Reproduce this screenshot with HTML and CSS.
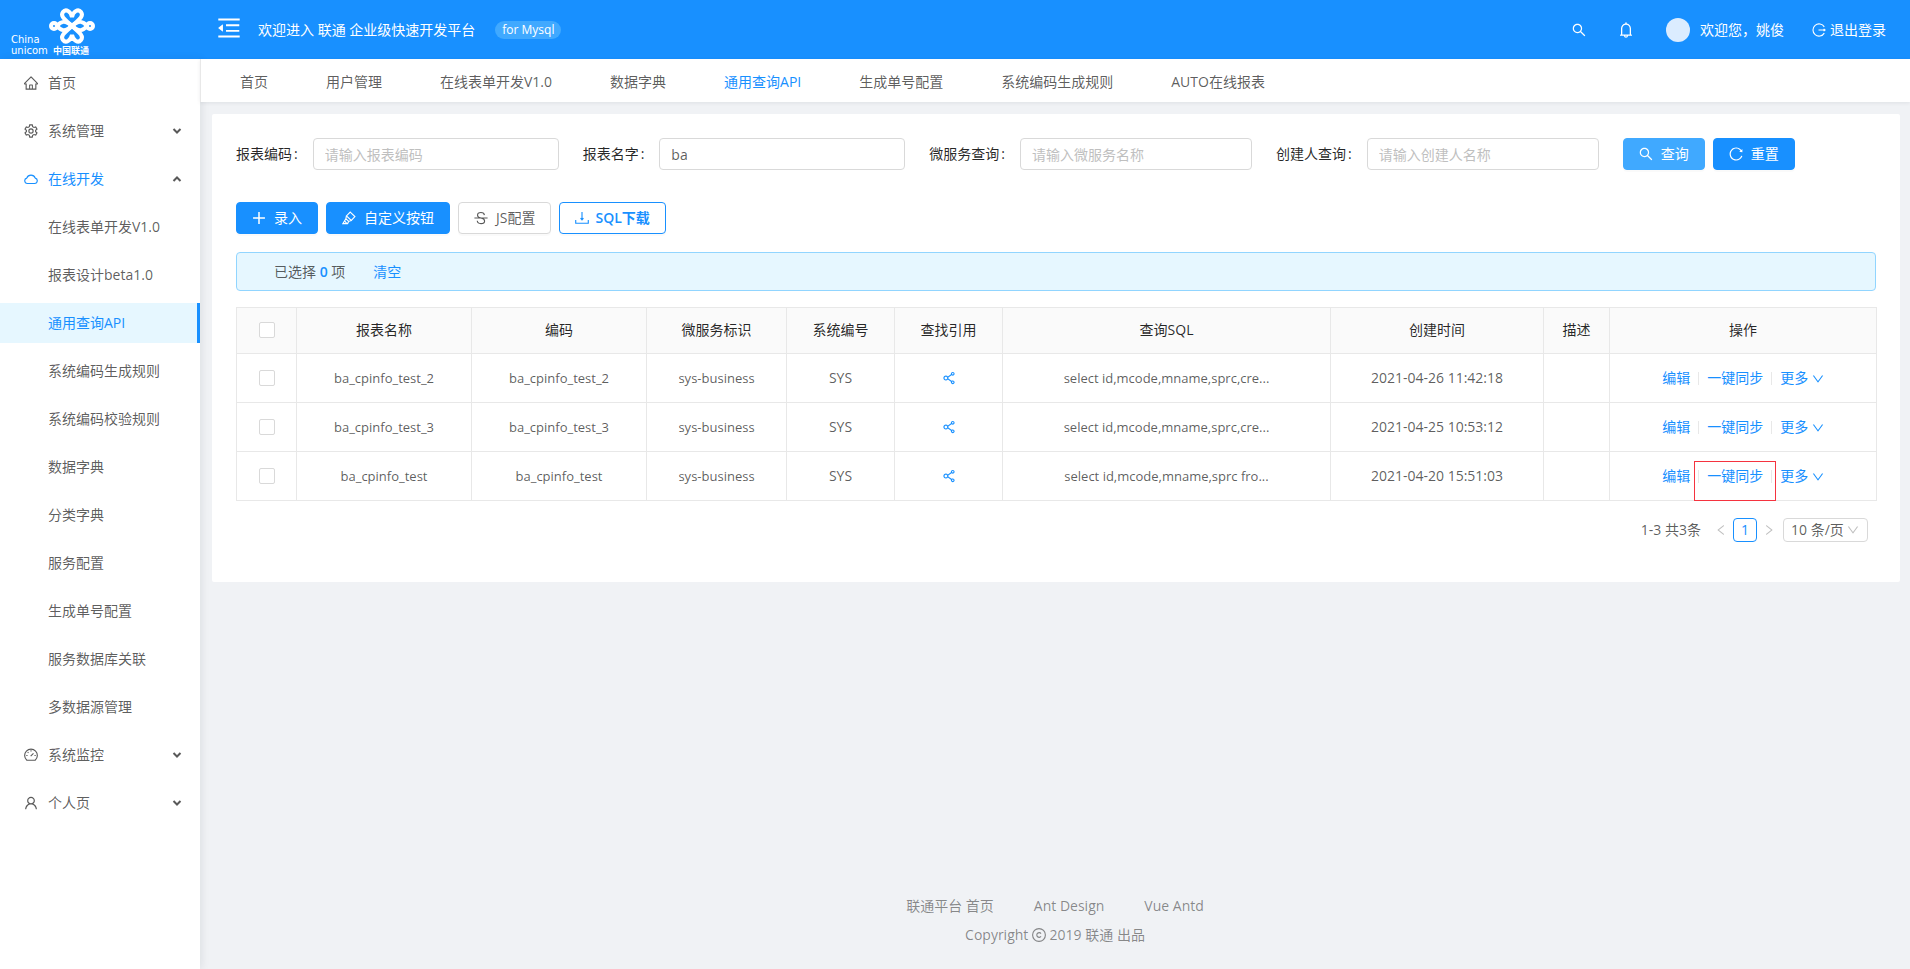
FILE: index.html
```html
<!DOCTYPE html>
<html lang="zh">
<head>
  <meta charset="UTF-8" />
  <title>通用查询API</title>
  <link rel="stylesheet" href="styles.css">
</head>
<body>
  <!-- icons -->
  <svg class="sprite" aria-hidden="true">
    <symbol id="i-search" viewBox="64 64 896 896"><path d="M909.6 854.5L649.9 594.8C690.2 542.7 712 479 712 412c0-80.2-31.3-155.4-87.9-212.1-56.6-56.7-132-87.9-212.1-87.9s-155.5 31.3-212.1 87.9C143.2 256.5 112 331.8 112 412c0 80.1 31.3 155.5 87.9 212.1C256.5 680.8 331.8 712 412 712c67 0 130.6-21.8 182.7-62l259.7 259.6a8.2 8.2 0 0 0 11.6 0l43.6-43.5a8.2 8.2 0 0 0 0-11.6zM570.4 570.4C528 612.7 471.8 636 412 636s-116-23.3-158.4-65.6C211.3 528 188 471.8 188 412s23.3-116.1 65.6-158.4C296 211.3 352.2 188 412 188s116.1 23.2 158.4 65.6S636 352.2 636 412s-23.3 116.1-65.6 158.4z"/></symbol>
    <symbol id="i-bell" viewBox="64 64 896 896"><path d="M816 768h-24V428c0-141.1-104.3-257.7-240-277.1V112c0-22.1-17.9-40-40-40s-40 17.9-40 40v38.9c-135.7 19.4-240 136-240 277.1v340h-24c-17.7 0-32 14.3-32 32v32c0 4.4 3.6 8 8 8h216c0 61.8 50.2 112 112 112s112-50.2 112-112h216c4.4 0 8-3.6 8-8v-32c0-17.7-14.3-32-32-32zM512 888c-26.5 0-48-21.5-48-48h96c0 26.5-21.5 48-48 48zM304 768V428c0-55.6 21.6-107.8 60.9-147.1S456.4 220 512 220c55.6 0 107.8 21.6 147.1 60.9S720 372.4 720 428v340H304z"/></symbol>
    <symbol id="i-home" viewBox="64 64 896 896"><path d="M946.5 505L560.1 118.8l-25.9-25.9a31.5 31.5 0 0 0-44.4 0L77.5 505a63.9 63.9 0 0 0-18.8 46c.4 35.2 29.7 63.3 64.9 63.3h42.5V940h691.8V614.3h43.4c17.1 0 33.2-6.7 45.3-18.8a63.6 63.6 0 0 0 18.7-45.3c0-17-6.7-33.1-18.8-45.2zM568 868H456V664h112v204zm217.9-325.7V868H632V640c0-22.1-17.9-40-40-40H432c-22.1 0-40 17.9-40 40v228H238.1V542.3h-96l370-369.7 23.1 23.1L882 542.3h-96.1z"/></symbol>
    <symbol id="i-user" viewBox="64 64 896 896"><path d="M858.5 763.6a374 374 0 0 0-80.6-119.5 375.63 375.63 0 0 0-119.5-80.6c-.4-.2-.8-.3-1.2-.5C719.5 518 760 444.7 760 362c0-137-111-248-248-248S264 225 264 362c0 82.7 40.5 156 102.8 201.1-.4.2-.8.3-1.2.5-44.8 18.9-85 46-119.5 80.6a375.63 375.63 0 0 0-80.6 119.5A371.7 371.7 0 0 0 136 901.8a8 8 0 0 0 8 8.2h60c4.4 0 7.9-3.5 8-7.8 2-77.2 33-149.5 87.8-204.3 56.7-56.7 132-87.9 212.2-87.9s155.5 31.2 212.2 87.9C779 752.7 810 825 812 902.2c.1 4.4 3.6 7.8 8 7.8h60a8 8 0 0 0 8-8.2c-1-47.8-10.9-94.3-29.5-138.2zM512 534c-45.9 0-89.1-17.9-121.6-50.4S340 407.9 340 362c0-45.9 17.9-89.1 50.4-121.6S466.1 190 512 190s89.1 17.9 121.6 50.4S684 316.1 684 362c0 45.9-17.9 89.1-50.4 121.6S557.9 534 512 534z"/></symbol>
    <symbol id="i-fold" viewBox="64 64 896 896"><path d="M408 442h480c4.4 0 8-3.6 8-8v-56c0-4.4-3.6-8-8-8H408c-4.4 0-8 3.6-8 8v56c0 4.4 3.6 8 8 8zm-8 204c0 4.4 3.6 8 8 8h480c4.4 0 8-3.6 8-8v-56c0-4.4-3.6-8-8-8H408c-4.4 0-8 3.6-8 8v56zm504-486H120c-4.4 0-8 3.6-8 8v56c0 4.4 3.6 8 8 8h784c4.4 0 8-3.6 8-8v-56c0-4.4-3.6-8-8-8zm0 632H120c-4.4 0-8 3.6-8 8v56c0 4.4 3.6 8 8 8h784c4.4 0 8-3.6 8-8v-56c0-4.4-3.6-8-8-8zM115.4 518.9L271.7 642c5.8 4.6 14.4.5 14.4-6.9V388.9c0-7.4-8.5-11.5-14.4-6.9L115.4 505.1a8.74 8.74 0 0 0 0 13.8z"/></symbol>
    <symbol id="i-share" viewBox="64 64 896 896"><path d="M752 664c-28.5 0-54.8 10-75.4 26.7L469.4 540.8a160.68 160.68 0 0 0 0-57.6l207.2-149.9C697.2 350 723.5 360 752 360c66.2 0 120-53.8 120-120s-53.8-120-120-120-120 53.8-120 120c0 11.6 1.6 22.7 4.7 33.3L439.9 415.8C410.7 377.1 364.3 352 312 352c-88.4 0-160 71.6-160 160s71.6 160 160 160c52.3 0 98.7-25.1 127.9-63.8l196.8 142.5c-3.1 10.6-4.7 21.8-4.7 33.3 0 66.2 53.8 120 120 120s120-53.8 120-120-53.8-120-120-120zm0-476c28.7 0 52 23.3 52 52s-23.3 52-52 52-52-23.3-52-52 23.3-52 52-52zM312 600c-48.5 0-88-39.5-88-88s39.5-88 88-88 88 39.5 88 88-39.5 88-88 88zm440 236c-28.7 0-52-23.3-52-52s23.3-52 52-52 52 23.3 52 52-23.3 52-52 52z"/></symbol>
    <symbol id="i-reload" viewBox="64 64 896 896"><path d="M909.1 209.3l-56.4 44.1C775.8 155.1 656.2 92 521.9 92 290 92 102.3 279.5 102 511.5 101.7 743.7 289.8 932 521.9 932c181.3 0 335.8-115 394.6-276.1 1.5-4.2-.7-8.9-4.9-10.3l-56.7-19.5a8 8 0 0 0-10.1 4.8c-1.8 5-3.8 10-5.9 14.9-17.3 41-42.1 77.8-73.7 109.4A344.77 344.77 0 0 1 655.9 829c-42.3 17.9-87.4 27-133.8 27-46.5 0-91.5-9.1-133.8-27A341.5 341.5 0 0 1 279 755.2a342.16 342.16 0 0 1-73.7-109.4c-17.9-42.4-27-87.4-27-133.9s9.1-91.5 27-133.9c17.3-41 42.1-77.8 73.7-109.4 31.6-31.6 68.4-56.4 109.3-73.8 42.3-17.9 87.4-27 133.8-27 46.5 0 91.5 9.1 133.8 27a341.5 341.5 0 0 1 109.3 73.8c9.9 9.9 19.2 20.4 27.8 31.4l-60.2 47a8 8 0 0 0 3 14.1l175.6 43c5 1.2 9.9-2.6 9.9-7.7l.8-180.9c-.1-6.6-7.8-10.3-13-6.2z"/></symbol>
    <symbol id="i-down" viewBox="64 64 896 896"><path d="M884 256h-75c-5.1 0-9.9 2.5-12.9 6.6L512 654.2 227.9 262.6c-3-4.1-7.8-6.6-12.9-6.6h-75c-6.5 0-10.3 7.4-6.5 12.7l352.6 486.1c12.8 17.6 39 17.6 51.7 0l352.6-486.1c3.9-5.3.1-12.7-6.4-12.7z"/></symbol>
    <symbol id="i-left" viewBox="64 64 896 896"><path d="M724 218.3V141c0-6.7-7.7-10.4-12.9-6.3L260.3 486.8a31.86 31.86 0 0 0 0 50.3l450.8 352.1c5.3 4.1 12.9.4 12.9-6.3v-77.3c0-4.9-2.3-9.6-6.1-12.6l-360-281 360-281.1c3.8-3 6.1-7.7 6.1-12.6z"/></symbol>
    <symbol id="i-right" viewBox="64 64 896 896"><path d="M765.7 486.8L314.9 134.7A7.97 7.97 0 0 0 302 141v77.3c0 4.9 2.3 9.6 6.1 12.6l360 281.1-360 281.1c-3.9 3-6.1 7.7-6.1 12.6V883c0 6.7 7.7 10.4 12.9 6.3l450.8-352.1a31.96 31.96 0 0 0 0-50.4z"/></symbol>
    <symbol id="i-plus" viewBox="64 64 896 896"><path d="M464 132h96v332h332v96H560v332h-96V560H132v-96h332z"/></symbol>
    <symbol id="i-setting" viewBox="64 64 896 896"><g class="line"><path d="M430 120h164l24 118 84 48 112-38 82 142-88 78v88l88 78-82 142-112-38-84 48-24 118H430l-24-118-84-48-112 38-82-142 88-78v-88l-88-78 82-142 112 38 84-48z"/><circle cx="512" cy="512" r="136"/></g></symbol>
    <symbol id="i-cloud" viewBox="64 64 896 896"><path class="line" d="M280 800a176 176 0 0 1-38-346 288 288 0 0 1 540 0 176 176 0 0 1-38 346z"/></symbol>
    <symbol id="i-dashboard" viewBox="64 64 896 896"><g class="line"><path d="M246 846a406 406 0 1 1 532 0z"/><path d="M490 590l180-180M512 210v80M210 540h80M734 540h80M300 330l50 50"/></g></symbol>
    <symbol id="i-arrow" viewBox="0 0 10 10"><path class="arrow-line" d="M1.500 3l3.500 3.500 3.500-3.500"/></symbol>
    <symbol id="i-logout" viewBox="64 64 896 896"><path class="line" d="M850 310a390 390 0 1 0 0 404M480 512h420M810 440l90 72-90 72"/></symbol>
    <symbol id="i-highlight" viewBox="64 64 896 896"><g class="line"><path d="M590 130l300 290-230 250-310-290z"/><path d="M350 380l-40 180 180 170 170-60M310 560L120 870h300l70-140M230 690l130 170"/></g></symbol>
    <symbol id="i-strike" viewBox="64 64 896 896"><path class="line" d="M90 512h844M730 330c-10-110-110-170-220-170-130 0-220 70-220 170 0 130 120 160 222 182 130 30 230 70 230 190 0 100-100 170-230 170s-230-70-240-180"/></symbol>
    <symbol id="i-download" viewBox="64 64 896 896"><path class="line" d="M512 130v480M420 520l92 110 92-110M110 640v210h804V640"/></symbol>
    <symbol id="i-copyright" viewBox="64 64 896 896"><g class="line"><circle cx="512" cy="512" r="410"/><path d="M640 420a150 150 0 1 0 0 184"/></g></symbol>
  </svg>

  <header class="header">
    <a class="logo" href="#" aria-label="中国联通">
      <svg width="100" height="59" viewBox="0 0 100 59">
        <g class="knot">
          <circle cx="54" cy="26" r="3"/>
          <circle cx="90" cy="26" r="3"/>
          <path d="M57 26C61 21 65 20 72 26S83 31 87 26M57 26C61 31 65 32 72 26S83 21 87 26"/>
          <path d="M72 26C64 19 60 16 63 12S71 12 72 17C73 12 78 8 81 12S80 19 72 26"/>
          <path d="M72 26C64 33 60 36 63 40S71 40 72 35C73 40 78 44 81 40S80 33 72 26"/>
        </g>
        <text class="logo-en" x="11" y="43">China</text>
        <text class="logo-en" x="11" y="54">unicom</text>
        <text class="logo-cn" x="53" y="54">中国联通</text>
      </svg>
    </a>
    <button class="icon-btn fold" aria-label="收起菜单"><svg class="icon"><use href="#i-fold"/></svg></button>
    <span class="welcome">欢迎进入 联通 企业级快速开发平台</span>
    <span class="pill">for Mysql</span>
    <div class="header-right">
      <button class="icon-btn" aria-label="搜索"><svg class="icon"><use href="#i-search"/></svg></button>
      <button class="icon-btn bell" aria-label="通知"><svg class="icon"><use href="#i-bell"/></svg></button>
      <a class="user" href="#"><span class="avatar"></span>欢迎您，姚俊</a>
      <a class="logout" href="#"><svg class="icon"><use href="#i-logout"/></svg>退出登录</a>
    </div>
  </header>

  <div class="layout">
    <nav class="sidebar">
      <a class="item" href="#"><svg class="icon"><use href="#i-home"/></svg>首页</a>
      <a class="item" href="#"><svg class="icon"><use href="#i-setting"/></svg>系统管理<svg class="arrow"><use href="#i-arrow"/></svg></a>
      <a class="item open" href="#"><svg class="icon"><use href="#i-cloud"/></svg>在线开发<svg class="arrow"><use href="#i-arrow"/></svg></a>
      <a class="item sub" href="#">在线表单开发V1.0</a>
      <a class="item sub" href="#">报表设计beta1.0</a>
      <a class="item sub selected" href="#">通用查询API</a>
      <a class="item sub" href="#">系统编码生成规则</a>
      <a class="item sub" href="#">系统编码校验规则</a>
      <a class="item sub" href="#">数据字典</a>
      <a class="item sub" href="#">分类字典</a>
      <a class="item sub" href="#">服务配置</a>
      <a class="item sub" href="#">生成单号配置</a>
      <a class="item sub" href="#">服务数据库关联</a>
      <a class="item sub" href="#">多数据源管理</a>
      <a class="item" href="#"><svg class="icon"><use href="#i-dashboard"/></svg>系统监控<svg class="arrow"><use href="#i-arrow"/></svg></a>
      <a class="item" href="#"><svg class="icon"><use href="#i-user"/></svg>个人页<svg class="arrow"><use href="#i-arrow"/></svg></a>
    </nav>

    <div class="main">
      <nav class="tabs">
        <a href="#">首页</a>
        <a href="#">用户管理</a>
        <a href="#">在线表单开发V1.0</a>
        <a href="#">数据字典</a>
        <a class="active" href="#">通用查询API</a>
        <a href="#">生成单号配置</a>
        <a href="#">系统编码生成规则</a>
        <a href="#">AUTO在线报表</a>
      </nav>

      <main class="card">
        <form class="search">
          <div class="field"><label for="code">报表编码</label><input id="code" type="text" placeholder="请输入报表编码"></div>
          <div class="field"><label for="name">报表名字</label><input id="name" type="text" value="ba"></div>
          <div class="field"><label for="service">微服务查询</label><input id="service" type="text" placeholder="请输入微服务名称"></div>
          <div class="field"><label for="creator">创建人查询</label><input id="creator" type="text" placeholder="请输入创建人名称"></div>
          <div class="field actions">
            <button type="button" class="btn primary hover"><svg class="icon"><use href="#i-search"/></svg>查询</button>
            <button type="button" class="btn primary"><svg class="icon"><use href="#i-reload"/></svg>重置</button>
          </div>
        </form>

        <div class="toolbar">
          <button class="btn primary"><svg class="icon"><use href="#i-plus"/></svg>录入</button>
          <button class="btn primary"><svg class="icon"><use href="#i-highlight"/></svg>自定义按钮</button>
          <button class="btn"><svg class="icon"><use href="#i-strike"/></svg>JS配置</button>
          <button class="btn ghost"><svg class="icon"><use href="#i-download"/></svg>SQL下载</button>
        </div>

        <div class="alert">
          <span>已选择 <b>0</b> 项</span>
          <a href="#">清空</a>
        </div>

        <table class="table">
          <colgroup>
            <col class="w-check"><col class="w-name"><col class="w-name"><col class="w-service"><col class="w-sys">
            <col class="w-sys"><col class="w-sql"><col class="w-time"><col class="w-desc"><col class="w-ops">
          </colgroup>
          <thead>
            <tr>
              <th><input type="checkbox" aria-label="全选"></th>
              <th>报表名称</th><th>编码</th><th>微服务标识</th><th>系统编号</th><th>查找引用</th>
              <th>查询SQL</th><th>创建时间</th><th>描述</th><th>操作</th>
            </tr>
          </thead>
          <tbody>
            <tr>
              <td><input type="checkbox" aria-label="ba_cpinfo_test_2"></td>
              <td class="code">ba_cpinfo_test_2</td><td class="code">ba_cpinfo_test_2</td><td class="code">sys-business</td><td>SYS</td>
              <td><a href="#" aria-label="查找引用"><svg class="icon"><use href="#i-share"/></svg></a></td>
              <td class="code">select id,mcode,mname,sprc,cre...</td><td>2021-04-26 11:42:18</td><td></td>
              <td><div class="ops"><a href="#">编辑</a><a href="#">一键同步</a><a href="#">更多 <svg class="icon"><use href="#i-down"/></svg></a></div></td>
            </tr>
            <tr>
              <td><input type="checkbox" aria-label="ba_cpinfo_test_3"></td>
              <td class="code">ba_cpinfo_test_3</td><td class="code">ba_cpinfo_test_3</td><td class="code">sys-business</td><td>SYS</td>
              <td><a href="#" aria-label="查找引用"><svg class="icon"><use href="#i-share"/></svg></a></td>
              <td class="code">select id,mcode,mname,sprc,cre...</td><td>2021-04-25 10:53:12</td><td></td>
              <td><div class="ops"><a href="#">编辑</a><a href="#">一键同步</a><a href="#">更多 <svg class="icon"><use href="#i-down"/></svg></a></div></td>
            </tr>
            <tr>
              <td><input type="checkbox" aria-label="ba_cpinfo_test"></td>
              <td class="code">ba_cpinfo_test</td><td class="code">ba_cpinfo_test</td><td class="code">sys-business</td><td>SYS</td>
              <td><a href="#" aria-label="查找引用"><svg class="icon"><use href="#i-share"/></svg></a></td>
              <td class="code">select id,mcode,mname,sprc fro...</td><td>2021-04-20 15:51:03</td><td></td>
              <td><div class="ops"><a href="#">编辑</a><a class="marked" href="#">一键同步</a><a href="#">更多 <svg class="icon"><use href="#i-down"/></svg></a></div></td>
            </tr>
          </tbody>
        </table>

        <div class="pagination">
          <span class="total">1-3 共3条</span>
          <button class="page-arrow" aria-label="上一页" disabled><svg class="icon"><use href="#i-left"/></svg></button>
          <button class="page">1</button>
          <button class="page-arrow" aria-label="下一页" disabled><svg class="icon"><use href="#i-right"/></svg></button>
          <div class="page-size">
            <select aria-label="每页条数"><option>10 条/页</option></select>
            <svg class="icon"><use href="#i-down"/></svg>
          </div>
        </div>
      </main>

      <footer class="footer">
        <div class="links"><a href="#">联通平台 首页</a><a href="#">Ant Design</a><a href="#">Vue Antd</a></div>
        <div class="copyright">Copyright <svg class="icon"><use href="#i-copyright"/></svg> 2019 联通 出品</div>
      </footer>
    </div>
  </div>
</body>
</html>
```
FILE: styles.css
```css
* { box-sizing: border-box; }
body {
  margin: 0;
  min-height: 100vh;
  display: flex;
  flex-direction: column;
  background: #f0f2f5;
  color: rgba(0, 0, 0, .65);
  font: 14px/20px "Open Sans", "Noto Sans CJK SC", sans-serif;
}
a { color: #1890ff; text-decoration: none; }
button, input, select { font: inherit; color: inherit; }
button { cursor: pointer; }

.sprite { display: none; }
.icon { width: 14px; height: 14px; fill: currentColor; flex: none; }
.line { fill: none; stroke: currentColor; stroke-width: 72; }
.arrow-line { fill: none; stroke: currentColor; stroke-width: 2; }

/* header */
.header {
  height: 59px;
  display: flex;
  align-items: center;
  background: #1890ff;
  color: #fff;
}
.logo { width: 217px; height: 59px; }
.knot { fill: none; stroke: #fff; stroke-width: 4; }
.logo-en { fill: #fff; font: 10px "DejaVu Sans", sans-serif; }
.logo-cn { fill: #fff; font: bold 9px "Noto Sans CJK SC", sans-serif; }
.icon-btn {
  display: flex;
  padding: 0;
  border: 0;
  background: none;
  color: #fff;
}
.fold .icon { width: 24px; height: 24px; }
.fold { padding-bottom: 4px; }
.welcome { margin-left: 17px; }
.pill {
  margin-left: 20px;
  padding: 0 7px;
  border-radius: 9px;
  background: #40a9ff;
  font-size: 12px;
  line-height: 18px;
}
.header-right {
  margin-left: auto;
  padding-right: 24px;
  display: flex;
  align-items: center;
}
.header-right a { color: #fff; display: flex; align-items: center; }
.bell { margin: 0 32px; }
.bell .icon { width: 16px; height: 16px; }
.avatar {
  width: 24px;
  height: 24px;
  margin-right: 10px;
  border-radius: 50%;
  background: #dbecff;
}
.logout { gap: 4px; margin-left: 28px; }

/* sidebar */
.layout { flex: 1; display: flex; }
.sidebar {
  width: 200px;
  flex: none;
  background: #fff;
  box-shadow: 2px 0 8px rgba(0, 21, 41, .08);
}
.item {
  height: 40px;
  margin: 4px 0 8px;
  padding: 0 18px 1px 24px;
  display: flex;
  align-items: center;
  gap: 10px;
  color: rgba(0, 0, 0, .65);
}
.item + .item { margin-top: 0; }
.sub { padding-left: 48px; }
.open { color: #1890ff; }
.selected {
  color: #1890ff;
  background: #e6f7ff;
  border-right: 3px solid #1890ff;
}
.arrow { width: 10px; height: 10px; margin-left: auto; color: rgba(0, 0, 0, .65); }
.open .arrow { transform: rotate(180deg); }

/* content */
.main { flex: 1; min-width: 0; display: flex; flex-direction: column; }
.tabs {
  height: 43px;
  padding: 2px 39px 0;
  display: flex;
  align-items: center;
  gap: 58px;
  position: relative;
  background: #fff;
  border-left: 1px solid #e8e8e8;
  box-shadow: 0 1px 4px rgba(0, 21, 41, .08);
}
.tabs a { color: rgba(0, 0, 0, .65); }
.tabs .active { color: #1890ff; }
.card {
  margin: 12px 10px 0 12px;
  padding: 24px 24px 40px;
  position: relative;
  border-radius: 2px;
  background: #fff;
}

.search { margin: 0 -12px 32px; display: grid; grid-template-columns: repeat(24, 1fr); }
.field { grid-column: span 5; padding: 0 12px; display: flex; align-items: center; }
.field label { flex: none; color: rgba(0, 0, 0, .85); }
.field label::after { content: ":"; margin: 0 15px 0 2px; }
.field input {
  flex: 1;
  min-width: 0;
  height: 32px;
  padding: 4px 11px;
  border: 1px solid #d9d9d9;
  border-radius: 4px;
}
.field input::placeholder { color: #bfbfbf; }
.actions { grid-column: span 4; gap: 8px; }

.btn {
  height: 32px;
  padding: 0 15px;
  display: flex;
  align-items: center;
  gap: 8px;
  border: 1px solid #d9d9d9;
  border-radius: 4px;
  background: #fff;
  white-space: nowrap;
  box-shadow: 0 2px 0 rgba(0, 0, 0, .02);
}
.primary { border-color: #1890ff; background: #1890ff; color: #fff; }
.hover { border-color: #40a9ff; background: #40a9ff; }
.ghost { border-color: #1890ff; color: #1890ff; font-weight: 600; gap: 6px; }
.toolbar { display: flex; gap: 8px; margin-bottom: 18px; }

.alert {
  display: flex;
  align-items: center;
  gap: 28px;
  min-height: 39px;
  padding: 0 37px;
  margin-bottom: 16px;
  border: 1px solid #91d5ff;
  border-radius: 4px;
  background: #e6f7ff;
}
.alert b { color: #1890ff; font-weight: 600; }

/* table */
.table {
  width: 100%;
  table-layout: fixed;
  border-collapse: collapse;
  text-align: center;
}
.w-check { width: 60px; }
.w-name { width: 175px; }
.w-service { width: 140px; }
.w-sys { width: 108px; }
.w-sql { width: 328px; }
.w-time { width: 213px; }
.w-desc { width: 66px; }
.w-ops { width: 267px; }
th, td { height: 49px; padding: 0 8px 1px; border: 1px solid #e8e8e8; }
th { height: 46px; background: #fafafa; color: rgba(0, 0, 0, .85); font-weight: 400; }
.code { font-size: 13px; }
td .icon { vertical-align: -2px; }
input[type="checkbox"] {
  appearance: none;
  display: block;
  width: 16px;
  height: 16px;
  margin: 0 auto;
  border: 1px solid #d9d9d9;
  border-radius: 2px;
  background: #fff;
}
.ops { display: flex; justify-content: center; align-items: center; }
.ops a { position: relative; }
.ops a + a::before {
  content: "";
  display: inline-block;
  width: 1px;
  height: 13px;
  margin: 0 8px;
  vertical-align: -2px;
  background: #e8e8e8;
}
.ops .icon { width: 12px; height: 12px; vertical-align: -2px; }
.ops .marked::after {
  content: "";
  position: absolute;
  inset: -5px -13px -15px 4px;
  border: 1px solid #f5333f;
}

.pagination {
  display: flex;
  justify-content: flex-end;
  align-items: center;
  margin-top: 17px;
  padding-right: 8px;
}
.total { margin-right: 8px; }
.page-arrow {
  width: 24px;
  height: 24px;
  padding: 0;
  display: flex;
  align-items: center;
  justify-content: center;
  border: 0;
  background: none;
  color: #bfbfbf;
}
.page-arrow .icon { width: 12px; height: 12px; }
.page {
  width: 24px;
  height: 24px;
  padding: 0;
  border: 1px solid #1890ff;
  border-radius: 4px;
  background: #fff;
  color: #1890ff;
}
.page-size { position: relative; margin-left: 2px; }
.page-size select {
  appearance: none;
  width: 85px;
  height: 24px;
  padding: 0 7px;
  border: 1px solid #d9d9d9;
  border-radius: 4px;
  background: #fff;
}
.page-size .icon {
  position: absolute;
  right: 9px;
  top: 6px;
  width: 12px;
  height: 12px;
  color: #bfbfbf;
  pointer-events: none;
}

.footer { margin-top: auto; padding-bottom: 24px; text-align: center; color: rgba(0, 0, 0, .45); }
.footer a { color: inherit; }
.links { display: flex; justify-content: center; gap: 40px; margin-bottom: 9px; }
.copyright .icon { vertical-align: -2px; }
```
